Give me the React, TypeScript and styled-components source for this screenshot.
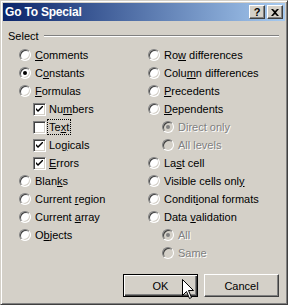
import * as React from 'react';
import styled, { createGlobalStyle } from 'styled-components';

/*!
 * Styles
 */

const GlobalStyle = createGlobalStyle`
  html, body {
    margin: 0;
    padding: 0;
    background: #d4d0c8;
  }
  body {
    font-family: "Liberation Sans", Arial, sans-serif;
    font-size: 11px;
    color: #000;
  }
`;

const Window = styled.div`
  position: relative;
  box-sizing: border-box;
  width: 288px;
  height: 305px;
  background: #d4d0c8;
  border: 1px solid;
  border-color: #d4d0c8 #404040 #404040 #d4d0c8;
  box-shadow: inset 1px 1px #fff, inset -1px -1px #808080;
  padding: 2px;
  display: flex;
  flex-direction: column;
`;

const TitleBar = styled.div`
  height: 18px;
  display: flex;
  align-items: center;
  padding: 0 2px 0 2px;
  background: linear-gradient(to right, #0a246a, #a6caf0);
`;

const Title = styled.span`
  flex: 1;
  color: #fff;
  font-weight: bold;
  font-size: 12px;
  letter-spacing: -0.2px;
`;

const CaptionButton = styled.span<{ $gap?: number }>`
  box-sizing: border-box;
  width: 16px;
  height: 14px;
  margin-left: ${(p) => p.$gap || 0}px;
  background: #d4d0c8;
  border: 1px solid;
  border-color: #fff #404040 #404040 #fff;
  box-shadow: inset -1px -1px #808080;
  display: flex;
  align-items: center;
  justify-content: center;
  font-weight: bold;
  font-size: 11px;
  line-height: 1;
`;

const Body = styled.div`
  flex: 1;
  display: flex;
  flex-direction: column;
  padding: 8px 4px 5px 5px;
`;

const GroupHead = styled.div`
  height: 14px;
  display: flex;
  align-items: center;
  gap: 5px;
`;

const GroupLine = styled.span`
  flex: 1;
  height: 0;
  margin-right: 2px;
  border-top: 1px solid #808080;
  border-bottom: 1px solid #fff;
`;

const Columns = styled.div`
  display: grid;
  grid-template-columns: 129px 1fr;
  padding: 3px 0 0 11px;
`;

const Column = styled.div`
  display: flex;
  flex-direction: column;
`;

const Row = styled.div<{ $indent?: boolean; $disabled?: boolean }>`
  height: 18px;
  display: flex;
  align-items: center;
  gap: 4px;
  padding-left: ${(p) => (p.$indent ? 14 : 0)}px;
  color: ${(p) => (p.$disabled ? '#808080' : '#000')};
  text-shadow: ${(p) => (p.$disabled ? '1px 1px #fff' : 'none')};
  white-space: nowrap;
`;

const Radio = styled.span<{ $on?: boolean; $disabled?: boolean }>`
  box-sizing: border-box;
  flex: none;
  width: 12px;
  height: 12px;
  border-radius: 50%;
  border: 1px solid;
  border-color: #808080 #fff #fff #808080;
  box-shadow: inset 1px 1px #404040, inset -1px -1px #d4d0c8;
  background: ${(p) => (p.$disabled ? '#d4d0c8' : '#fff')};
  display: flex;
  align-items: center;
  justify-content: center;

  &::after {
    content: '';
    width: 4px;
    height: 4px;
    border-radius: 50%;
    background: ${(p) => (p.$disabled ? '#808080' : '#000')};
    display: ${(p) => (p.$on ? 'block' : 'none')};
  }
`;

const Box = styled.span`
  box-sizing: border-box;
  flex: none;
  width: 13px;
  height: 13px;
  margin-right: -1px;
  border: 1px solid;
  border-color: #808080 #fff #fff #808080;
  box-shadow: inset 1px 1px #404040, inset -1px -1px #d4d0c8;
  background: #fff;
  display: flex;
  align-items: center;
  justify-content: center;
`;

const Label = styled.span<{ $focus?: boolean }>`
  padding: 1px;
  margin: -1px;
  outline: ${(p) => (p.$focus ? '1px dotted #000' : 'none')};
`;

const Key = styled.u`
  text-decoration-thickness: 1px;
  text-underline-offset: 1px;
`;

const Buttons = styled.div`
  margin-top: auto;
  display: flex;
  justify-content: flex-end;
  gap: 6px;
  padding-right: 2px;
`;

const Button = styled.div<{ $default?: boolean }>`
  box-sizing: border-box;
  width: 75px;
  height: 23px;
  display: flex;
  align-items: center;
  justify-content: center;
  background: #d4d0c8;
  border: 1px solid ${(p) => (p.$default ? '#000' : '#fff')};
  ${(p) =>
    p.$default
      ? 'box-shadow: inset 1px 1px #fff, inset -1px -1px #404040, inset -2px -2px #808080;'
      : 'border-color: #fff #404040 #404040 #fff; box-shadow: inset -1px -1px #808080;'}
`;

const Cursor = styled.svg`
  position: absolute;
  left: 181px;
  top: 278px;
`;

/*!
 * Data
 */

type Item = {
  kind: 'radio' | 'check';
  text: string;
  key?: number;
  on?: boolean;
  indent?: boolean;
  disabled?: boolean;
  focus?: boolean;
};

const left: Item[] = [
  { kind: 'radio', text: 'Comments', key: 0 },
  { kind: 'radio', text: 'Constants', key: 1, on: true },
  { kind: 'radio', text: 'Formulas', key: 0 },
  { kind: 'check', text: 'Numbers', key: 2, on: true, indent: true },
  { kind: 'check', text: 'Text', key: 2, indent: true, focus: true },
  { kind: 'check', text: 'Logicals', key: 2, on: true, indent: true },
  { kind: 'check', text: 'Errors', key: 0, on: true, indent: true },
  { kind: 'radio', text: 'Blanks', key: 4 },
  { kind: 'radio', text: 'Current region', key: 8 },
  { kind: 'radio', text: 'Current array', key: 8 },
  { kind: 'radio', text: 'Objects', key: 1 },
];

const right: Item[] = [
  { kind: 'radio', text: 'Row differences', key: 2 },
  { kind: 'radio', text: 'Column differences', key: 4 },
  { kind: 'radio', text: 'Precedents', key: 0 },
  { kind: 'radio', text: 'Dependents', key: 0 },
  { kind: 'radio', text: 'Direct only', on: true, indent: true, disabled: true },
  { kind: 'radio', text: 'All levels', indent: true, disabled: true },
  { kind: 'radio', text: 'Last cell', key: 2 },
  { kind: 'radio', text: 'Visible cells only', key: 17 },
  { kind: 'radio', text: 'Conditional formats', key: 6 },
  { kind: 'radio', text: 'Data validation', key: 5 },
  { kind: 'radio', text: 'All', on: true, indent: true, disabled: true },
  { kind: 'radio', text: 'Same', indent: true, disabled: true },
];

const Check = () => (
  <svg width="7" height="7" viewBox="0 0 7 7">
    <path d="M0 2 L0 4 L2 6 L7 1 L7 -1 L2 4 Z" fill="#000" />
  </svg>
);

const renderText = (item: Item) => {
  if (item.key === undefined) return item.text;
  const i = item.key;
  return (
    <>
      {item.text.slice(0, i)}
      <Key>{item.text[i]}</Key>
      {item.text.slice(i + 1)}
    </>
  );
};

const Option = ({ item }: { item: Item }) => (
  <Row $indent={item.indent} $disabled={item.disabled}>
    {item.kind === 'radio' ? (
      <Radio $on={item.on} $disabled={item.disabled} />
    ) : (
      <Box>{item.on && <Check />}</Box>
    )}
    <Label $focus={item.focus}>{renderText(item)}</Label>
  </Row>
);

/*!
 * Expo
 */

export default function App() {
  return (
    <Window>
      <GlobalStyle />
      <TitleBar>
        <Title>Go To Special</Title>
        <CaptionButton>?</CaptionButton>
        <CaptionButton $gap={2}>
          <svg width="8" height="7" viewBox="0 0 8 7">
            <path d="M0 0 L2 0 L4 2 L6 0 L8 0 L5 3.5 L8 7 L6 7 L4 5 L2 7 L0 7 L3 3.5 Z" fill="#000" />
          </svg>
        </CaptionButton>
      </TitleBar>
      <Body>
        <GroupHead>
          <span>Select</span>
          <GroupLine />
        </GroupHead>
        <Columns>
          <Column>
            {left.map((item) => (
              <Option key={item.text} item={item} />
            ))}
          </Column>
          <Column>
            {right.map((item) => (
              <Option key={item.text} item={item} />
            ))}
          </Column>
        </Columns>
        <Buttons>
          <Button $default>OK</Button>
          <Button>Cancel</Button>
        </Buttons>
      </Body>
      <Cursor width="13" height="21" viewBox="0 0 13 21">
        <path
          d="M0.5 0.5 L0.5 16.5 L4.5 12.5 L7.5 19.5 L9.5 18.5 L6.5 11.5 L11.5 11.5 Z"
          fill="#fff"
          stroke="#000"
          strokeWidth="1"
        />
      </Cursor>
    </Window>
  );
}
